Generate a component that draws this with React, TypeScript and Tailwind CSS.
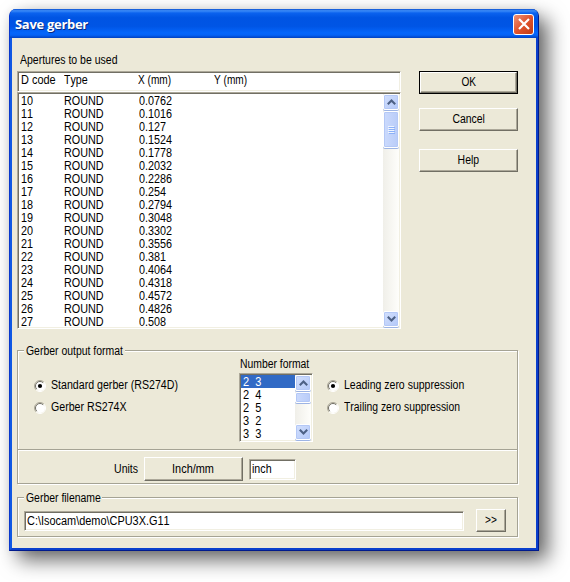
import React from 'react';

const apertures: [string, string][] = [
  ['10', '0.0762'], ['11', '0.1016'], ['12', '0.127'], ['13', '0.1524'],
  ['14', '0.1778'], ['15', '0.2032'], ['16', '0.2286'], ['17', '0.254'],
  ['18', '0.2794'], ['19', '0.3048'], ['20', '0.3302'], ['21', '0.3556'],
  ['22', '0.381'], ['23', '0.4064'], ['24', '0.4318'], ['25', '0.4572'],
  ['26', '0.4826'], ['27', '0.508'],
];

const formats = ['2  3', '2  4', '2  5', '3  2', '3  3'];

const sunken =
  'bg-white border border-t-[#aca899] border-l-[#aca899] border-r-white border-b-white shadow-[inset_1px_1px_0_#716f64,inset_-1px_-1px_0_#f1efe2]';
const raised =
  'flex items-center justify-center bg-[#ece9d8] border border-t-white border-l-white border-r-[#716f64] border-b-[#716f64] shadow-[inset_-1px_-1px_0_#aca899]';
const etched = 'border border-[#a5a394] shadow-[1px_1px_0_#fff,inset_1px_1px_0_#fff]';

function Arrow({ down = false }: { down?: boolean }) {
  return (
    <div className="flex h-4 w-4 shrink-0 items-center justify-center rounded-[2px] border border-white bg-gradient-to-br from-[#d3e0fd] to-[#b3c8f8] shadow-[inset_0_0_0_1px_#b4c8f6,0_1px_0_#9db4e4]">
      <svg width="9" height="6" viewBox="0 0 9 6" fill="none" stroke="#4d6185" strokeWidth="2.1">
        <path d={down ? 'M.8 .8L4.5 4.5L8.2 .8' : 'M.8 5.2L4.5 1.5L8.2 5.2'} />
      </svg>
    </div>
  );
}

function ScrollBar({ thumb, grip = false }: { thumb: string; grip?: boolean }) {
  return (
    <div className="flex w-4 shrink-0 flex-col bg-gradient-to-r from-[#f0efe9] to-[#fefefb]">
      <Arrow />
      <div
        className={`mt-px flex w-4 flex-col items-center justify-center gap-px rounded-[2px] border border-white bg-gradient-to-r from-[#cbdafd] to-[#b9ccf8] shadow-[inset_0_0_0_1px_#b4c8f6,0_1px_0_#9db4e4] ${thumb}`}
      >
        {grip &&
          [0, 1, 2, 3].map((i) => (
            <div key={i} className="h-px w-[6px] bg-[#eef4fe] shadow-[1px_1px_0_#8cb0f8]" />
          ))}
      </div>
      <div className="grow" />
      <Arrow down />
    </div>
  );
}

/** Condensed UI text; the scale class sets how narrow the letters run. */
function T({ s, children }: { s: string; children: React.ReactNode }) {
  return <span className={`inline-block origin-left ${s}`}>{children}</span>;
}

function Radio({ label, checked = false, s }: { label: string; checked?: boolean; s: string }) {
  return (
    <div className="flex h-[13px] items-center">
      <svg width="12" height="12" viewBox="0 0 12 12" className="mr-[5px] shrink-0">
        <circle cx="6" cy="6" r="5" fill="#fff" />
        <path d="M2.1 9.9A5.5 5.5 0 0 1 9.9 2.1" fill="none" stroke="#aca899" />
        <path d="M2.8 9.2A4.5 4.5 0 0 1 9.2 2.8" fill="none" stroke="#716f64" />
        <path d="M9.9 2.1A5.5 5.5 0 0 1 2.1 9.9" fill="none" stroke="#fff" />
        {checked && <circle cx="6" cy="6" r="2.1" fill="#000" />}
      </svg>
      <T s={s}>{label}</T>
    </div>
  );
}

export default function App() {
  return (
    <div className="h-[582px] w-[570px] overflow-hidden bg-white pl-[9px] pt-[9px] font-['Liberation_Sans',Arial,sans-serif] text-[12px] leading-[13px] [font-kerning:none] whitespace-pre text-black">
      <div className="flex h-[542px] w-[530px] flex-col rounded-t-[7px] border-x border-b border-l-[#0a38cc] border-r-[#001a8c] border-b-[#001a8c] bg-[#0054e3] shadow-[9px_9px_20px_rgba(0,0,0,0.6),0_0_8px_rgba(0,0,0,0.06)]">
        <div className="flex h-[29px] shrink-0 items-center rounded-t-[6px] bg-[linear-gradient(180deg,#0a4fd0_0%,#3c8cf8_6%,#0b62ee_14%,#0054e3_30%,#0055e5_60%,#0466fb_82%,#0463f6_90%,#0040c0_100%)] pr-[4px] pl-[5px]">
          <span className="grow pt-[2px] font-['Open_Sans','Noto_Sans',sans-serif] text-[13px] font-bold tracking-[-0.3px] text-white [text-shadow:1px_1px_0_#0a2c80]">
            Save gerber
          </span>
          <div className="mt-px flex h-[21px] w-[21px] items-center justify-center rounded-[3px] border border-white bg-gradient-to-br from-[#ee9175] via-[#e0532c] to-[#c23c12]">
            <svg width="12" height="12" viewBox="0 0 12 12" stroke="#fff" strokeWidth="2.2">
              <path d="M1 1L11 11M11 1L1 11" />
            </svg>
          </div>
        </div>

        <div className="flex grow flex-col border-x-2 border-b-2 border-l-[#1058e4] border-r-[#0a3fcc] border-b-[#0a3fcc] bg-[#ece9d8]">
          <div className="flex pl-[5px]">
            <div className="w-[384px]">
              <div className="h-[33px] pt-4 pl-[3px]">
                <T s="scale-x-[0.875]">Apertures to be used</T>
              </div>
              <div className={`flex h-[21px] pt-[2px] pl-[3px] ${sunken}`}>
                <div className="w-[43px]"><T s="scale-x-[0.91]">D code</T></div>
                <div className="w-[74px]"><T s="scale-x-[0.89]">Type</T></div>
                <div className="w-[76px]"><T s="scale-x-[0.84]">X (mm)</T></div>
                <div><T s="scale-x-[0.84]">Y (mm)</T></div>
              </div>
              <div className={`flex h-[237px] overflow-hidden p-px ${sunken}`}>
                <div className="grow pt-px pl-[2px]">
                  {apertures.map(([code, x]) => (
                    <div key={code} className="flex h-[13px]">
                      <div className="w-[43px]"><T s="scale-x-[0.9]">{code}</T></div>
                      <div className="w-[75px]"><T s="scale-x-[0.9]">ROUND</T></div>
                      <T s="scale-x-[0.9]">{x}</T>
                    </div>
                  ))}
                </div>
                <ScrollBar thumb="h-[37px]" grip />
              </div>
            </div>
            <div className="ml-[18px] flex w-[99px] flex-col pt-[33px]">
              <div className="border border-black">
                <div className={`h-[21px] ${raised}`}><T s="scale-x-[0.84] origin-center!">OK</T></div>
              </div>
              <div className={`mt-[14px] h-[23px] ${raised}`}><T s="scale-x-[0.87] origin-center!">Cancel</T></div>
              <div className={`mt-[18px] h-[23px] ${raised}`}><T s="scale-x-[0.87] origin-center!">Help</T></div>
            </div>
          </div>

          <div className={`mt-[21px] ml-[5px] h-[134px] w-[501px] ${etched}`}>
            <div className="-mt-[6px] ml-[6px] w-[101px] bg-[#ece9d8] pl-[2px]">
              <T s="scale-x-[0.87]">Gerber output format</T>
            </div>
            <div className="flex h-[91px]">
              <div className="flex w-[221px] flex-col gap-[9px] pt-[21px] pl-4">
                <Radio label="Standard gerber (RS274D)" checked s="scale-x-[0.885]" />
                <Radio label="Gerber RS274X" s="scale-x-[0.885]" />
              </div>
              <div className="w-[74px]">
                <div className="h-[15px] pl-px"><T s="scale-x-[0.865]">Number format</T></div>
                <div className={`flex h-[69px] overflow-hidden p-px ${sunken}`}>
                  <div className="grow">
                    {formats.map((f, i) => (
                      <div key={f} className={`h-[13px] pl-[2px] leading-[15px] ${i === 0 ? 'bg-[#316ac5] text-white' : ''}`}>
                        <T s="scale-x-[0.92]">{f}</T>
                      </div>
                    ))}
                  </div>
                  <ScrollBar thumb="h-[11px]" />
                </div>
              </div>
              <div className="flex flex-col gap-[9px] pt-[21px] pl-[14px]">
                <Radio label="Leading zero suppression" checked s="scale-x-[0.875]" />
                <Radio label="Trailing zero suppression" s="scale-x-[0.865]" />
              </div>
            </div>
            <div className="h-[2px] border-t border-t-[#a5a394] border-b border-b-white" />
            <div className="flex h-8 pt-[6px]">
              <div className="w-[126px] pt-[6px] pl-24"><T s="scale-x-[0.88]">Units</T></div>
              <div className={`h-6 w-[99px] ${raised}`}><T s="scale-x-[0.91] origin-center!">Inch/mm</T></div>
              <div className={`mt-[2px] ml-[6px] h-[21px] w-[47px] pt-[3px] pl-[2px] ${sunken}`}>
                <T s="scale-x-[0.89]">inch</T>
              </div>
            </div>
          </div>

          <div className={`mt-[13px] ml-[5px] h-[40px] w-[501px] ${etched}`}>
            <div className="-mt-[6px] ml-[6px] w-[78px] bg-[#ece9d8] pl-[2px]">
              <T s="scale-x-[0.87]">Gerber filename</T>
            </div>
            <div className="flex items-center pt-[4px] pl-[6px]">
              <div className={`h-5 w-[440px] pt-[3px] pl-[2px] ${sunken}`}>
                <T s="scale-x-[0.91]">C:\Isocam\demo\CPU3X.G11</T>
              </div>
              <div className={`ml-3 h-[23px] w-[30px] ${raised}`}><T s="scale-x-[0.84] origin-center!">&gt;&gt;</T></div>
            </div>
          </div>
        </div>
      </div>
    </div>
  );
}
